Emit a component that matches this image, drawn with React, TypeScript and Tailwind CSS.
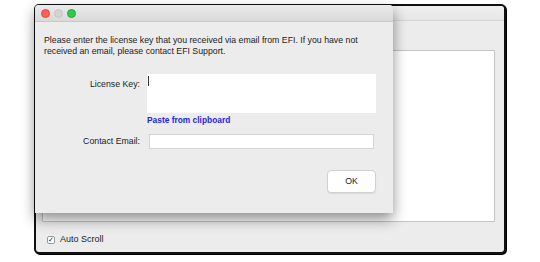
const font = "font-['Liberation_Sans',Arial,sans-serif]";

function TrafficLights() {
  return (
    <div className="flex items-center gap-[4px] pl-[6px]">
      <span className="block w-[9px] h-[9px] rounded-full bg-[#fc605c] border border-[#e0443e]" />
      <span className="block w-[9px] h-[9px] rounded-full bg-[#d2d2d2] border border-[#c4c4c4]" />
      <span className="block w-[9px] h-[9px] rounded-full bg-[#35c94b] border border-[#24aa35]" />
    </div>
  );
}

function LicenseDialog() {
  return (
    <div className="absolute left-[-1px] top-[-1px] w-[358px] h-[208px] bg-[#ececec] rounded-t-[4px] shadow-[0_6px_14px_rgba(0,0,0,0.45)] flex flex-col">
      <div className="h-[17px] flex items-center bg-gradient-to-b from-[#ebebeb] to-[#d9d9d9] border-b border-[#c9c9c9] rounded-t-[4px]">
        <TrafficLights />
      </div>
      <p className="px-[9px] pt-[13px] text-[8.75px] leading-[11px] text-[#222] whitespace-nowrap">
        Please enter the license key that you received via email from EFI. If you have not
        <br />
        received an email, please contact EFI Support.
      </p>
      <div className="grid grid-cols-[105px_229px] gap-x-[7px] mt-[17px] text-[8.75px] text-[#222]">
        <div className="text-right pt-[4px]">License Key:</div>
        <div className="h-[39px] bg-white pl-[1px] pt-[2px]">
          <span className="block w-px h-[10px] bg-[#333]" />
        </div>
        <div />
        <div className="pt-[1px] text-[8.4px] text-[#2525e0] font-bold leading-[12px]">Paste from clipboard</div>
        <div className="text-right mt-[8px] leading-[15px]">Contact Email:</div>
        <div className="mt-[8px] pl-[2px] pr-[2px]">
          <div className="h-[15px] bg-white border border-[#d4d4d4]" />
        </div>
      </div>
      <div className="flex justify-end pr-[17px] mt-[21px]">
        <button className="w-[49px] h-[23px] bg-white border border-[#d0d0d0] rounded-[4px] text-[8.75px] text-[#222] shadow-[0_1px_1px_rgba(0,0,0,0.08)]">
          OK
        </button>
      </div>
    </div>
  );
}

export default function App() {
  return (
    <div className={`w-[540px] h-[262px] bg-white pl-[34px] pt-[4px] ${font}`}>
      <div className="relative w-[472px] h-[250px] border-2 border-[#111] rounded-[5px] bg-[#ececec] shadow-[1px_1px_0_#000] flex flex-col">
        <div className="h-[15px] bg-gradient-to-b from-[#f0f0f0] to-[#e6e6e6] border-b border-[#d6d6d6] rounded-t-[4px]" />
        <div className="mx-[6px] mt-[29px] h-[172px] w-[453px] bg-white border border-[#c4c4c4]" />
        <label className="flex items-center gap-[5px] ml-[11px] mt-[11px] text-[9px] text-[#222]">
          <span className="w-[8px] h-[8px] bg-white border border-[#9a9a9a] rounded-[2px] flex items-center justify-center text-[7px] leading-none">
            ✓
          </span>
          Auto Scroll
        </label>
        <LicenseDialog />
      </div>
    </div>
  );
}
